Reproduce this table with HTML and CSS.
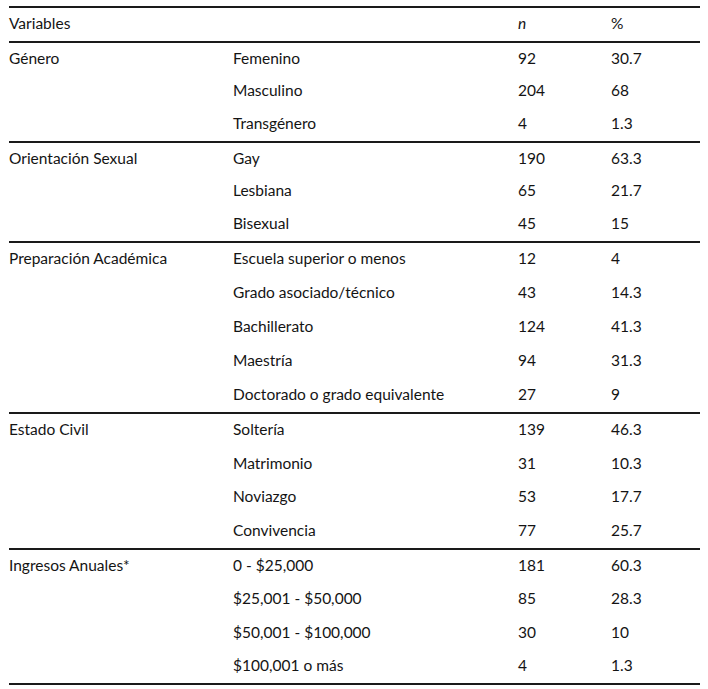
FILE: index.html
```html
<!DOCTYPE html>
<html lang="es">
<head>
<meta charset="utf-8">
<title>Tabla</title>
<link rel="stylesheet" href="styles.css">
</head>
<body>
<div class="page">
  <table class="data">
    <colgroup>
      <col class="c1"><col class="c2"><col class="c3"><col class="c4">
    </colgroup>
    <thead>
      <tr><th>Variables</th><th></th><th><em>n</em></th><th>%</th></tr>
    </thead>
    <tbody class="g3">
      <tr><td>Género</td><td>Femenino</td><td>92</td><td>30.7</td></tr>
      <tr><td></td><td>Masculino</td><td>204</td><td>68</td></tr>
      <tr><td></td><td>Transgénero</td><td>4</td><td>1.3</td></tr>
    </tbody>
    <tbody class="g3">
      <tr><td>Orientación Sexual</td><td>Gay</td><td>190</td><td>63.3</td></tr>
      <tr><td></td><td>Lesbiana</td><td>65</td><td>21.7</td></tr>
      <tr><td></td><td>Bisexual</td><td>45</td><td>15</td></tr>
    </tbody>
    <tbody class="g5">
      <tr><td>Preparación Académica</td><td>Escuela superior o menos</td><td>12</td><td>4</td></tr>
      <tr><td></td><td>Grado asociado/técnico</td><td>43</td><td>14.3</td></tr>
      <tr><td></td><td>Bachillerato</td><td>124</td><td>41.3</td></tr>
      <tr><td></td><td>Maestría</td><td>94</td><td>31.3</td></tr>
      <tr><td></td><td>Doctorado o grado equivalente</td><td>27</td><td>9</td></tr>
    </tbody>
    <tbody class="g4a">
      <tr><td>Estado Civil</td><td>Soltería</td><td>139</td><td>46.3</td></tr>
      <tr><td></td><td>Matrimonio</td><td>31</td><td>10.3</td></tr>
      <tr><td></td><td>Noviazgo</td><td>53</td><td>17.7</td></tr>
      <tr><td></td><td>Convivencia</td><td>77</td><td>25.7</td></tr>
    </tbody>
    <tbody class="g4b">
      <tr><td>Ingresos Anuales*</td><td>0 - $25,000</td><td>181</td><td>60.3</td></tr>
      <tr><td></td><td>$25,001 - $50,000</td><td>85</td><td>28.3</td></tr>
      <tr><td></td><td>$50,001 - $100,000</td><td>30</td><td>10</td></tr>
      <tr><td></td><td>$100,001 o más</td><td>4</td><td>1.3</td></tr>
    </tbody>
  </table>
</div>
</body>
</html>
```

FILE: styles.css
```css
html, body {
  margin: 0;
  padding: 0;
  background: #ffffff;
}

.page {
  padding: 6px 8px 0 9px;
}

.data {
  width: 691px;
  border-collapse: collapse;
  table-layout: fixed;
  font-family: Lato, "Open Sans", sans-serif;
  font-size: 15.5px;
  color: #141414;
  border-top: 2px solid #1a1a1a;
  border-bottom: 2px solid #1a1a1a;
}

.c1 { width: 224px; }
.c2 { width: 285px; }
.c3 { width: 93px; }
.c4 { width: 89px; }

.data th,
.data td {
  padding: 0 0 3px 0;
  text-align: left;
  font-weight: normal;
  vertical-align: middle;
  white-space: nowrap;
}

.data thead th {
  height: 30px;
}

.data tbody {
  border-top: 2px solid #1a1a1a;
}

.g3 td { height: 29.67px; }
.g5 td { height: 30.8px; }
.g4a td { height: 30.5px; }
.g4b td { height: 30.25px; }

.data em {
  font-style: italic;
}
```
